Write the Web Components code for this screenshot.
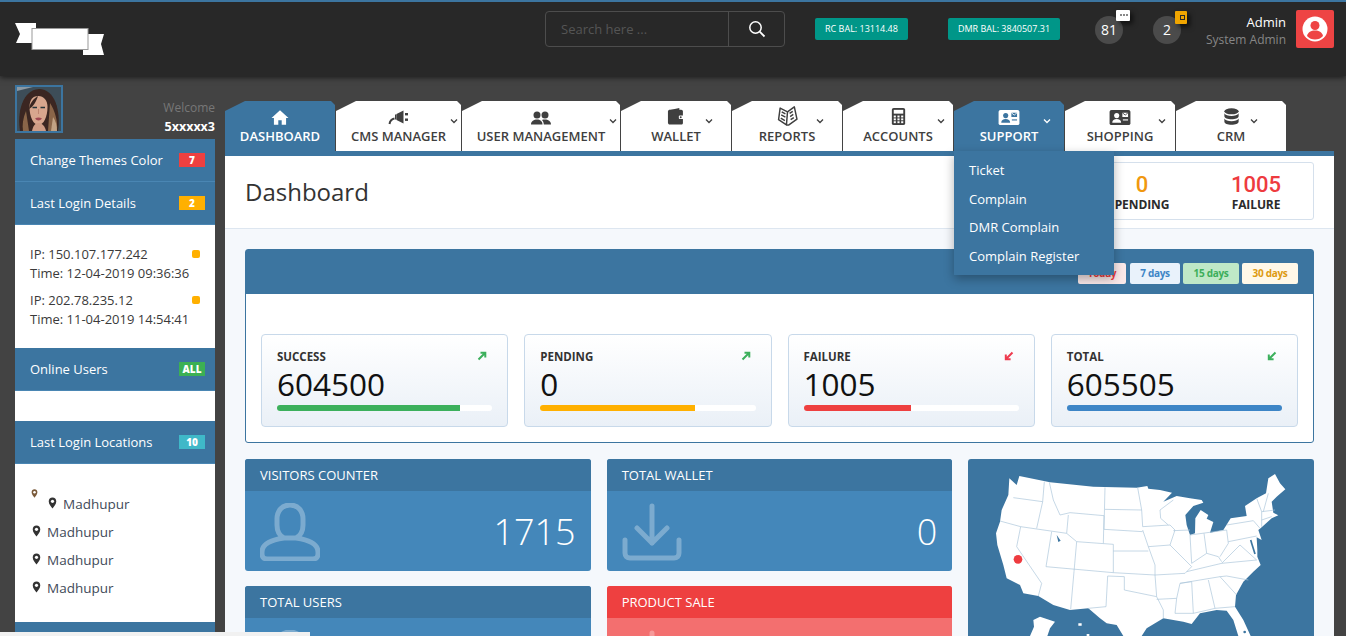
<!DOCTYPE html>
<html>
<head>
<meta charset="utf-8">
<title>Dashboard</title>
<style>
  html, body { margin: 0; height: 636px; overflow: hidden; }
  body { background: #434343; font-family: "Open Sans", sans-serif; font-size: 13px; color: #333; }
</style>
</head>
<body>
<app-shell>
  <top-bar slot="top"></top-bar>
  <side-bar slot="side"></side-bar>
  <main-area slot="main"></main-area>
</app-shell>

<script>
const ICONS = {
  home: '<path d="M10 1.5 0.5 10h2.7v7.5h4.9v-5h3.8v5h4.9V10h2.7z" fill="currentColor"/>',
  bullhorn: '<path d="M8 6 15 2.5v13L8 12z" fill="currentColor"/><path d="M8 6.5H6.5v5H8z" fill="currentColor"/><rect x="16.5" y="5" width="3" height="2.4" fill="currentColor"/><rect x="16.5" y="10.5" width="3" height="2.4" fill="currentColor"/><path d="M6 10.5C3 11 1.500 13 1 16" fill="none" stroke="currentColor" stroke-width="2"/>',
  users: '<circle cx="6" cy="6" r="3.500" fill="currentColor"/><circle cx="14" cy="6" r="3.500" fill="currentColor"/><path d="M0 15.500C0 12 3 10.500 6 10.500s5.500 1.500 5.500 5zM12.800 15.500c0-2-.6-3.600-2-4.600 1-.3 2.200-.4 3.200-.4 3 0 6 1.500 6 5z" fill="currentColor"/>',
  wallet: '<path d="M2 3 13 .5v3z" fill="currentColor"/><path d="M1 4.500C1 3.200 2 2.500 3 2.500h12c1 0 1.800.8 1.800 1.800v12c0 1-.8 1.700-1.800 1.700H3c-1.200 0-2-1-2-2.200z" fill="currentColor"/><rect x="12.500" y="8.500" width="5.500" height="3.600" rx="1" fill="#fff"/><circle cx="14.500" cy="10.300" r="1" fill="currentColor"/>',
  book: '<g fill="none" stroke="currentColor" stroke-width="1.400" stroke-linejoin="round"><path d="M10 5.500 3 2 1.500 13l7.500 5z"/><path d="M10 5.500 16.500.8 19 12.500 11 18.200 9 18"/><path d="M4.500 5.500 8 7.500M4 8.500 8 10.500M3.600 11.500l3.900 2.300M12 7l3-2M12.500 10l3-2M13 13l3-2"/></g>',
  calc: '<rect x="3" y="0.500" width="14" height="18" rx="2" fill="currentColor"/><rect x="5" y="2.500" width="10" height="4" fill="#fff"/><g fill="#fff"><rect x="5" y="8.500" width="2.200" height="2"/><rect x="8.900" y="8.500" width="2.200" height="2"/><rect x="12.800" y="8.500" width="2.200" height="2"/><rect x="5" y="11.500" width="2.200" height="2"/><rect x="8.900" y="11.500" width="2.200" height="2"/><rect x="12.800" y="11.500" width="2.200" height="2"/><rect x="5" y="14.500" width="2.200" height="2"/><rect x="8.900" y="14.500" width="2.200" height="2"/><rect x="12.800" y="14.500" width="2.200" height="2"/></g>',
  card: '<rect x="0" y="2" width="22" height="16" rx="2" fill="currentColor"/><circle cx="7.500" cy="8" r="2.700" fill="var(--hole)"/><path d="M2.800 15.500c0-2.700 2-4 4.700-4s4.700 1.300 4.700 4z" fill="var(--hole)"/><rect x="13.500" y="5" width="6" height="4.500" fill="var(--hole)"/><path d="M13.500 5l3 2.500 3-2.500" fill="none" stroke="currentColor" stroke-width=".9"/><rect x="14" y="12" width="5.500" height="1.200" fill="var(--hole)"/>',
  database: '<ellipse cx="10" cy="3.500" rx="7.500" ry="3.200" fill="currentColor"/><path d="M2.500 5.500v3.200c0 1.800 3.400 3.200 7.500 3.200s7.500-1.400 7.500-3.200V5.500c-1 1.800-4 2.900-7.500 2.900S3.500 7.300 2.500 5.500z" fill="currentColor"/><path d="M2.500 11v3.500c0 1.800 3.400 3.200 7.500 3.200s7.500-1.400 7.500-3.200V11c-1 1.800-4 2.900-7.500 2.900S3.500 12.800 2.500 11z" fill="currentColor"/>',
  pin: '<path d="M5 .5C2.500.5.800 2.300.8 4.700.8 7.500 3.500 10.500 5 12.500c1.500-2 4.200-5 4.200-7.800C9.200 2.300 7.500.5 5 .5z" fill="currentColor"/><circle cx="5" cy="4.600" r="1.800" fill="#fff"/>',
  person: '<path d="M30 2c-8 0-13 6-13 14v6c0 6 3 11 7 13h12c4-2 7-7 7-13v-6c0-8-5-14-13-14zM24 35C10 37 2 41 2 49v2c0 3 2 5 5 5h46c3 0 5-2 5-5v-2c0-8-8-12-22-14" fill="none" stroke="currentColor" stroke-width="5" stroke-linejoin="round"/>',
  download: '<path d="M30 3v37M15 25l15 15 15-15M3 37v13c0 3 2 5 5 5h44c3 0 5-2 5-5V37" fill="none" stroke="currentColor" stroke-width="5" stroke-linecap="round" stroke-linejoin="round"/>'
};

function svgIcon(name, w, h, box) {
  return `<svg width="${w}" height="${h}" viewBox="${box}" aria-hidden="true">${ICONS[name]}</svg>`;
}

class AppShell extends HTMLElement {
  constructor() {
    super();
    this.attachShadow({ mode: 'open' });
  }
  connectedCallback() {
    this.shadowRoot.innerHTML = `
      <style>
        :host { display: block; height: 636px; overflow: hidden; position: relative; }
        .body { display: flex; gap: 10px; padding: 9px 12px 0 15px; }
        .scroll {
          position: absolute; left: 0; bottom: 0; width: 310px; height: 4px; background: #f1f1f1;
        }
      </style>
      <slot name="top"></slot>
      <div class="body">
        <slot name="side"></slot>
        <slot name="main"></slot>
      </div>
      <div class="scroll"></div>
    `;
  }
}

class TopBar extends HTMLElement {
  constructor() {
    super();
    this.attachShadow({ mode: 'open' });
  }
  connectedCallback() {
    this.shadowRoot.innerHTML = `
      <style>
        :host {
          display: flex; align-items: flex-start; height: 74px; background: #282828;
          border-top: 2px solid #3c75a0; box-shadow: 0 1px 6px rgba(0,0,0,.7);
          position: relative; color: #fff; padding-left: 15px;
        }
        .logo { margin-top: 20px; width: 90px; height: 34px; flex: none; }
        .search {
          margin: 9px 0 0 440px; width: 238px; height: 34px; flex: none; display: flex;
          border: 1px solid #4d4d4d; border-radius: 4px;
        }
        .search span { flex: 1; padding-left: 15px; line-height: 34px; font-size: 13px; color: #555; }
        .search div { width: 55px; border-left: 1px solid #4d4d4d; display: flex; align-items: center; justify-content: center; }
        .bal {
          flex: none; margin-top: 16px; height: 22px; line-height: 22px; background: #009688; color: #fff;
          font-size: 9px; border-radius: 2px; text-align: center;
        }
        .rc { width: 93px; margin-left: 30px; }
        .dmr { width: 112px; margin-left: 40px; }
        .round {
          flex: none; position: relative; width: 28px; height: 28px; margin-top: 14px; border-radius: 50%;
          background: #4b4b4b; text-align: center; line-height: 28px; font-size: 14px;
        }
        .r1 { margin-left: 35px; }
        .r2 { margin-left: 30px; }
        .bubble, .purse { position: absolute; top: -6px; box-shadow: 3px 3px 5px rgba(0,0,0,.6); }
        .bubble { left: 21px; width: 14px; height: 11px; background: #fff; border-radius: 1px; }
        .bubble::after {
          content: ''; position: absolute; left: 4px; top: 4px; width: 2px; height: 2px; background: #888;
          box-shadow: 3px 0 #888, 6px 0 #888;
        }
        .purse { left: 22px; top: -5px; width: 12px; height: 13px; background: #f0a500; border-radius: 1px; }
        .purse::after {
          content: ''; position: absolute; left: 5px; top: 4px; width: 5px; height: 5px;
          border: 1px solid #282828; box-sizing: border-box;
        }
        .who { margin-left: auto; text-align: right; margin-top: 11px; line-height: 18px; font-size: 13px; }
        .who small { display: block; font-size: 12px; color: #868686; }
        .face {
          flex: none; width: 38px; height: 38px; margin: 8px 12px 0 10px; background: #ee4444;
          border-radius: 2px; display: flex; align-items: center; justify-content: center;
        }
      </style>
      <svg class="logo" viewBox="0 0 90 34">
        <path d="M0 1h21v20H1l4-9z" fill="#fff"/>
        <path d="M68 12h21l-3 10 3 11H68z" fill="#fff"/>
        <rect x="17" y="6.500" width="56" height="21" fill="#fff" stroke="#999" stroke-width="1"/>
      </svg>
      <div class="search">
        <span>Search here ...</span>
        <div>
          <svg width="18" height="18" viewBox="0 0 18 18"><circle cx="7.500" cy="7.500" r="5.700" fill="none" stroke="#fff" stroke-width="1.500"/><path d="M11.700 11.700 16.500 16.500" stroke="#fff" stroke-width="1.800"/></svg>
        </div>
      </div>
      <div class="bal rc">RC BAL: 13114.48</div>
      <div class="bal dmr">DMR BAL: 3840507.31</div>
      <div class="round r1">81<i class="bubble"></i></div>
      <div class="round r2">2<i class="purse"></i></div>
      <div class="who">Admin<small>System Admin</small></div>
      <div class="face">
        <svg width="26" height="26" viewBox="0 0 26 26">
          <circle cx="13" cy="13" r="12.500" fill="#fff"/>
          <circle cx="13" cy="9.500" r="4.500" fill="#ee4444"/>
          <path d="M5 20c1-4 4-5.500 8-5.500s7 1.500 8 5.500c-2 2.500-5 3.500-8 3.500s-6-1-8-3.500z" fill="#ee4444"/>
        </svg>
      </div>
    `;
  }
}

class SideHead extends HTMLElement {
  constructor() {
    super();
    this.attachShadow({ mode: 'open' });
  }
  connectedCallback() {
    const color = this.getAttribute('color');
    const count = this.getAttribute('count');
    this.shadowRoot.innerHTML = `
      <style>
        :host {
          display: flex; align-items: center; justify-content: space-between; height: 42px;
          padding: 0 10px 0 15px; background: #3c75a0; color: #fff; font-size: 13px;
          border-bottom: 1px solid #4a86b3;
        }
        b {
          width: 26px; height: 14px; line-height: 14px; text-align: center; color: #fff; background: ${color};
          font-size: 10px; font-weight: 800; flex: none;
        }
      </style>
      <slot></slot><b>${count}</b>
    `;
  }
}

class LoginRow extends HTMLElement {
  constructor() {
    super();
    this.attachShadow({ mode: 'open' });
  }
  connectedCallback() {
    this.shadowRoot.innerHTML = `
      <style>
        :host { display: block; position: relative; line-height: 19px; font-size: 13px; color: #3a3a3a; margin-bottom: 8px; }
        i { position: absolute; right: 0; top: 5px; width: 8px; height: 8px; border-radius: 2px; background: #ffb000; }
      </style>
      <slot></slot><i></i>
    `;
  }
}

class LocationRow extends HTMLElement {
  constructor() {
    super();
    this.attachShadow({ mode: 'open' });
  }
  connectedCallback() {
    this.shadowRoot.innerHTML = `
      <style>
        :host { display: flex; align-items: center; gap: 6px; height: 28px; font-size: 13.500px; color: #3f4a59; }
        svg { color: #333; flex: none; margin-top: -3px; }
      </style>
      ${svgIcon('pin', 9, 12, '0 0 10 13')}<slot></slot>
    `;
  }
}

class SideBar extends HTMLElement {
  constructor() {
    super();
    this.attachShadow({ mode: 'open' });
  }
  connectedCallback() {
    this.shadowRoot.innerHTML = `
      <style>
        :host { display: block; width: 200px; flex: none; }
        .me { display: flex; justify-content: space-between; height: 54px; }
        .pic { width: 44px; height: 44px; border: 2px solid #3c75a0; display: block; }
        .name { text-align: right; color: #777; font-size: 12px; padding-top: 14px; line-height: 18px; }
        .name b { display: block; color: #fff; font-size: 12.500px; font-weight: 700; line-height: 20px; }
        .white { background: #fff; }
        .logins { height: 123px; box-sizing: border-box; padding: 20px 15px 0; }
        .gap { height: 30px; }
        .places { height: 158px; box-sizing: border-box; padding: 16px 0 0 17px; }
        .tiny { color: #7a5a3a; display: block; margin: 4px 0 -4px -1px; height: 10px; }
        .first { margin-left: 16px; }
        .foot { height: 20px; background: #3c75a0; }
      </style>
      <div class="me">
        <svg class="pic" viewBox="0 0 44 44">
          <defs><filter id="soft"><feGaussianBlur stdDeviation=".45"/></filter></defs>
          <rect width="44" height="44" fill="#3d4d58"/>
          <path d="M0 0h16L0 4z" fill="#8c99a3"/>
          <g filter="url(#soft)">
            <path d="M3 44C0 26 5 3 22 2c16 0 22 22 19 42z" fill="#3a2720"/>
            <path d="M33 16c5 8 8 18 7 28h-9zM9 24C6 31 5 38 6 44h6z" fill="#8a6548"/>
            <path d="M36 30c3 4 4 9 4 14h-6z" fill="#c2a284"/>
            <path d="M12.500 20c0-8 4-11 9-11s9 4 9 11c0 10-4 18-9 18s-9-8-9-18z" fill="#d8a68e"/>
            <path d="M12 22c1-6 4-10 9-13-2 6-5 11-9 13z" fill="#3a2720"/>
            <path d="M15.500 20.500h4.500M23.500 20.500H28" stroke="#27343a" stroke-width="1.700"/>
            <path d="M21.500 22v5" stroke="#bf8570" stroke-width="1"/>
            <path d="M18 31.500c2-1.200 5-1.200 7 0-2 2.500-5 2.500-7 0z" fill="#a24a52"/>
            <path d="M15 44c1-5 3-8 6.500-8s6.500 3 7.500 8z" fill="#cf9c85"/>
          </g>
        </svg>
        <div class="name">Welcome<b>5xxxxx3</b></div>
      </div>
      <side-head color="#ee4040" count="7">Change Themes Color</side-head>
      <side-head color="#ffb000" count="2">Last Login Details</side-head>
      <div class="white logins">
        <login-row>IP: 150.107.177.242<br>Time: 12-04-2019 09:36:36</login-row>
        <login-row>IP: 202.78.235.12<br>Time: 11-04-2019 14:54:41</login-row>
      </div>
      <side-head color="#3cb054" count="ALL">Online Users</side-head>
      <div class="white gap"></div>
      <side-head color="#3fb8c8" count="10">Last Login Locations</side-head>
      <div class="white places">
        <span class="tiny">${svgIcon('pin', 7, 9, '0 0 10 13')}</span>
        <location-row class="first">Madhupur</location-row>
        <location-row>Madhupur</location-row>
        <location-row>Madhupur</location-row>
        <location-row>Madhupur</location-row>
      </div>
      <div class="foot"></div>
    `;
  }
}

class NavTab extends HTMLElement {
  constructor() {
    super();
    this.attachShadow({ mode: 'open' });
  }
  connectedCallback() {
    const on = this.hasAttribute('active');
    const caret = this.getAttribute('caret');
    const [w, h, box] = (this.getAttribute('size') || '18,18,0 0 20 18').split(',');
    this.shadowRoot.innerHTML = `
      <style>
        :host {
          display: flex; flex: none; flex-direction: column; align-items: center; justify-content: flex-end; position: relative;
          box-sizing: border-box; min-width: 110px; height: 50px; padding: 0 14px 5px;
          background: ${on ? '#3c75a0' : '#fff'}; color: ${on ? '#fff' : '#3f3f3f'};
          --hole: ${on ? '#3c75a0' : '#fff'};
          font-size: 13px; font-weight: 600; white-space: nowrap; line-height: 19px;
          clip-path: polygon(20px 0, calc(100% - 4px) 0, 100% 4px, 100% 100%, 0 100%, 0 10px);
        }
        svg { display: block; margin-bottom: 1px; }
        .caret { position: absolute; top: 17px; right: ${caret}px; }
      </style>
      ${svgIcon(this.getAttribute('icon'), w, h, box)}
      <slot></slot>
      ${caret ? `<svg class="caret" width="8" height="6" viewBox="0 0 8 6"><path d="M1 1.500 4 4.500 7 1.500" fill="none" stroke="currentColor" stroke-width="1.300"/></svg>` : ''}
    `;
  }
}

class NavMenu extends HTMLElement {
  constructor() {
    super();
    this.attachShadow({ mode: 'open' });
  }
  connectedCallback() {
    this.shadowRoot.innerHTML = `
      <style>
        :host {
          position: absolute; left: 729px; top: 50px; z-index: 5; width: 160px; height: 124px; box-sizing: border-box;
          background: #3c75a0; color: #fff; font-size: 13px; padding: 5px 15px 0;
          box-shadow: 0 4px 10px rgba(0,0,0,.3);
        }
        div { height: 28.600px; line-height: 28.600px; }
      </style>
      <div>Ticket</div>
      <div>Complain</div>
      <div>DMR Complain</div>
      <div>Complain Register</div>
    `;
  }
}

class TotalBox extends HTMLElement {
  constructor() {
    super();
    this.attachShadow({ mode: 'open' });
  }
  connectedCallback() {
    this.shadowRoot.innerHTML = `
      <style>
        :host {
          display: flex; width: 230px; height: 58px; box-sizing: border-box; border: 1px solid #d5e0ec; border-radius: 3px;
        }
        div { flex: 1; text-align: center; font-size: 12px; font-weight: 700; color: #2b2b2b; line-height: 15px; letter-spacing: -.1px; padding-top: 9px; }
        b { display: block; font-family: Roboto, sans-serif; font-size: 22px; font-weight: 500; line-height: 25px; letter-spacing: 0; }
      </style>
      <div><b style="color:#f0980f">0</b>PENDING</div>
      <div><b style="color:#ee3b3f">1005</b>FAILURE</div>
    `;
  }
}

class StatCard extends HTMLElement {
  constructor() {
    super();
    this.attachShadow({ mode: 'open' });
  }
  connectedCallback() {
    const color = this.getAttribute('color');
    const up = this.getAttribute('dir') === 'up';
    const arrow = up ? 'M1.500 8.500 7.500 2.500M3.500 1.800H8.300V6.600' : 'M8.500 1.500 2.500 7.500M1.800 3.500V8.300H6.600';
    this.shadowRoot.innerHTML = `
      <style>
        :host {
          display: block; position: relative; height: 93px; box-sizing: border-box; padding: 14px 15px 0;
          border: 1px solid #c8d9ea; border-radius: 4px; background: linear-gradient(#fff, #eaf0f7);
        }
        .label { font-size: 11.500px; font-weight: 700; color: #333; line-height: 15px; }
        .num { font-size: 31.500px; color: #111; line-height: 39px; height: 41px; }
        .track { height: 6px; border-radius: 3px; background: #fff; overflow: hidden; }
        .fill { height: 100%; width: ${this.getAttribute('pct')}%; background: ${color}; }
        svg { position: absolute; right: 20px; top: 16px; }
      </style>
      <div class="label"><slot name="label"></slot></div>
      <div class="num"><slot name="num"></slot></div>
      <div class="track"><div class="fill"></div></div>
      <svg width="10" height="10" viewBox="0 0 10 10"><path d="${arrow}" fill="none" stroke="${this.getAttribute('arrow')}" stroke-width="2"/></svg>
    `;
  }
}

class RangePill extends HTMLElement {
  constructor() {
    super();
    this.attachShadow({ mode: 'open' });
  }
  connectedCallback() {
    this.shadowRoot.innerHTML = `
      <style>
        :host {
          display: block; height: 21px; line-height: 21px; text-align: center; border-radius: 2px; font-size: 10px;
          font-weight: 700; letter-spacing: -.3px; width: ${this.getAttribute('w')}px;
          background: ${this.getAttribute('bg')}; color: ${this.getAttribute('fg')};
        }
      </style>
      <slot></slot>
    `;
  }
}

class InfoCard extends HTMLElement {
  constructor() {
    super();
    this.attachShadow({ mode: 'open' });
  }
  connectedCallback() {
    const red = this.hasAttribute('red');
    this.shadowRoot.innerHTML = `
      <style>
        :host { display: block; height: 112px; border-radius: 3px; overflow: hidden; color: #fff; background: ${red ? '#f36f6f' : '#4487ba'}; }
        .head { height: 32px; line-height: 32px; padding: 0 15px; font-size: 13px; background: ${red ? '#ee4040' : '#3c75a0'}; }
        .body { display: flex; align-items: center; justify-content: space-between; height: 80px; padding: 0 15px; }
        svg { color: rgba(255,255,255,.3); flex: none; margin-top: 2px; }
        .val { font-size: 36px; font-weight: 300; }
      </style>
      <div class="head"><slot name="title"></slot></div>
      <div class="body">${svgIcon(this.getAttribute('icon'), 60, 58, '0 0 60 58')}<div class="val"><slot name="value"></slot></div></div>
    `;
  }
}

class MapCard extends HTMLElement {
  constructor() {
    super();
    this.attachShadow({ mode: 'open' });
  }
  connectedCallback() {
    this.shadowRoot.innerHTML = `
      <style>
        :host { display: block; grid-row: span 2; position: relative; background: #3c75a0; border-radius: 3px; height: 239px; overflow: hidden; }
        svg { position: absolute; left: -8px; top: -9px; }
      </style>
      <svg width="386" height="186" viewBox="0 0 1158 558">
        <path fill="#fff" d="M178 78 270 97 400 110 530 113 562 108 565 116 600 120 636 128 610 155 650 138 690 145 725 150 730 158 700 168 676 195 680 225 690 255 705 250 706 205 722 180 745 195 740 206 760 216 750 248 790 240 812 205 860 198 855 168 890 145 918 130 925 85 945 72 960 100 976 118 950 140 935 155 940 188 955 196 935 205 905 232 895 240 905 270 890 262 892 300 892 320 902 345 880 365 850 395 828 435 825 470 850 510 872 558 835 558 820 510 800 482 770 480 720 490 695 522 670 515 610 505 560 535 545 558 490 558 470 525 440 520 420 505 385 475 330 480 280 465 235 438 190 430 180 405 140 385 130 345 112 285 108 250 120 215 125 180 145 135 148 85 170 105z"/>
        <path fill="#fff" d="M240 500 285 515 270 535 262 558 210 558 222 530 220 510zM355 520h10v7h-10zM380 552h8v6h-8z"/>
        <circle cx="854" cy="546" r="4" fill="#3c75a0"/>
        <g fill="none" stroke="#a9c4da" stroke-width="2">
          <path d="M160 143 248 155M253 95 248 155 230 235M268 97 280 150 300 195 330 188 432 197 430 280M325 195 320 250"/>
          <path d="M120 213 182 230 320 250 350 275 460 283M182 230 170 290 245 400 235 438M275 245 258 350 460 368 585 375M350 275 342 365 332 478"/>
          <path d="M435 112 432 238 548 245M435 178 545 180M533 113 545 180 548 230 630 225M460 283 460 368M460 303 565 303"/>
          <path d="M548 240 565 290 585 345 585 375 590 440 610 480 610 505M443 378 493 380 493 420 590 440M443 378 438 470 385 475"/>
          <path d="M630 225 645 240 630 285 565 290M630 285 695 350 675 370 585 375M590 448 650 445 660 400 695 395 700 490M650 445 645 490 700 490"/>
          <path d="M600 180 602 205 625 225M600 180 640 150M745 390 765 475M780 380 830 435M700 490 765 475 825 470M640 242 690 240M690 255 695 340M732 250 740 310M690 255 800 240"/>
          <path d="M800 240 805 280M800 225 880 212 900 235M805 275 890 258M680 365 785 340 890 330M695 340 740 310 775 320 785 335"/>
          <path d="M805 280 780 320M785 340 840 285 890 330M660 400 780 380 800 378 865 390M890 145 905 185 905 230M910 185 925 130M905 185 945 180M905 210 935 200"/>
        </g>
        <path d="M872 270 885 312" stroke="#3c75a0" stroke-width="5" fill="none"/>
        <path d="M290 255 302 272 295 276z" fill="#3c75a0"/>
        <circle cx="174" cy="328" r="13" fill="#ee3b3f"/>
      </svg>
    `;
  }
}

class MainArea extends HTMLElement {
  constructor() {
    super();
    this.attachShadow({ mode: 'open' });
  }
  connectedCallback() {
    this.shadowRoot.innerHTML = `
      <style>
        :host { display: block; flex: 1; min-width: 0; margin-top: 16px; position: relative; }
        .tabs { display: flex; gap: 1px; }
        .content { border-top: 5px solid #3c75a0; background: #f5f8fc; height: 480px; }
        .title {
          display: flex; align-items: flex-start; justify-content: space-between; height: 73px; box-sizing: border-box;
          padding: 6px 20px 0; background: #fff; border-bottom: 1px solid #dde6f0;
        }
        h1 { margin: 13px 0 0; font-size: 24px; font-weight: 400; color: #333; line-height: 33px; }
        .wrap { padding: 20px 20px 0; }
        .panel { border: 1px solid #3c75a0; border-radius: 3px; background: #fff; }
        .bar {
          height: 44px; background: #3c75a0; display: flex; justify-content: flex-end; align-items: flex-start;
          gap: 3px; padding: 13px 15px 0; box-sizing: border-box;
        }
        .bar range-pill:first-child { margin-right: 1px; }
        .stats { display: grid; grid-template-columns: repeat(4, 1fr); gap: 16px; padding: 40px 15px 15px; }
        .grid { display: grid; grid-template-columns: repeat(3, 1fr); column-gap: 16px; row-gap: 15px; margin-top: 16px; }
        .fixed125 { width: 125px; }
        .fixed158 { width: 158px; }
      </style>
      <div class="tabs">
        <nav-tab active icon="home" size="18,17,0 0 20 19">DASHBOARD</nav-tab>
        <nav-tab class="fixed125" icon="bullhorn" caret="3" size="22,18,0 0 21 18">CMS MANAGER</nav-tab>
        <nav-tab class="fixed158" icon="users" caret="3" size="20,17,0 0 20 17">USER MANAGEMENT</nav-tab>
        <nav-tab icon="wallet" caret="18" size="18,19,0 0 19 19">WALLET</nav-tab>
        <nav-tab icon="book" caret="18" size="21,20,0 0 20 19">REPORTS</nav-tab>
        <nav-tab icon="calc" caret="8" size="19,19,0 0 20 19">ACCOUNTS</nav-tab>
        <nav-tab active icon="card" caret="13" size="22,18,0 0 22 19">SUPPORT</nav-tab>
        <nav-tab icon="card" caret="9" size="22,18,0 0 22 19">SHOPPING</nav-tab>
        <nav-tab icon="database" caret="28" size="19,19,0 0 20 18">CRM</nav-tab>
      </div>
      <nav-menu></nav-menu>
      <div class="content">
        <div class="title">
          <h1>Dashboard</h1>
          <total-box></total-box>
        </div>
        <div class="wrap">
          <div class="panel">
            <div class="bar">
              <range-pill w="48" bg="#fbe9e9" fg="#ee3b3f">Today</range-pill>
              <range-pill w="50" bg="#e9f2fb" fg="#3d85c6">7 days</range-pill>
              <range-pill w="56" bg="#bfe8c7" fg="#3cae5a">15 days</range-pill>
              <range-pill w="56" bg="#fff8e8" fg="#dd9a10">30 days</range-pill>
            </div>
            <div class="stats">
              <stat-card color="#3cb05c" pct="85" dir="up" arrow="#3cb05c"><span slot="label">SUCCESS</span><span slot="num">604500</span></stat-card>
              <stat-card color="#ffb000" pct="72" dir="up" arrow="#3cb05c"><span slot="label">PENDING</span><span slot="num">0</span></stat-card>
              <stat-card color="#ee4040" pct="50" dir="down" arrow="#ee3b4f"><span slot="label">FAILURE</span><span slot="num">1005</span></stat-card>
              <stat-card color="#3d85c6" pct="100" dir="down" arrow="#3cb05c"><span slot="label">TOTAL</span><span slot="num">605505</span></stat-card>
            </div>
          </div>
          <div class="grid">
            <info-card icon="person"><span slot="title">VISITORS COUNTER</span><span slot="value">1715</span></info-card>
            <info-card icon="download"><span slot="title">TOTAL WALLET</span><span slot="value">0</span></info-card>
            <map-card></map-card>
            <info-card icon="person"><span slot="title">TOTAL USERS</span></info-card>
            <info-card red icon="download"><span slot="title">PRODUCT SALE</span></info-card>
          </div>
        </div>
      </div>
    `;
  }
}

customElements.define('app-shell', AppShell);
customElements.define('top-bar', TopBar);
customElements.define('side-head', SideHead);
customElements.define('login-row', LoginRow);
customElements.define('location-row', LocationRow);
customElements.define('side-bar', SideBar);
customElements.define('nav-tab', NavTab);
customElements.define('nav-menu', NavMenu);
customElements.define('total-box', TotalBox);
customElements.define('stat-card', StatCard);
customElements.define('range-pill', RangePill);
customElements.define('info-card', InfoCard);
customElements.define('map-card', MapCard);
customElements.define('main-area', MainArea);
</script>
</body>
</html>
